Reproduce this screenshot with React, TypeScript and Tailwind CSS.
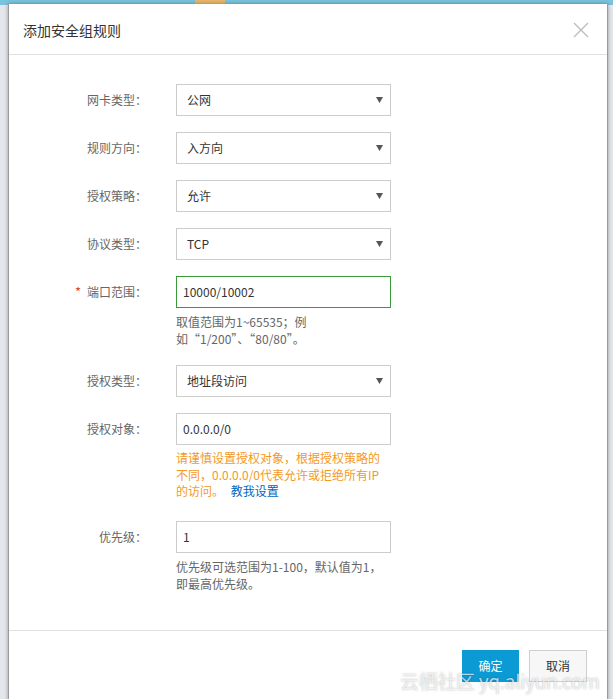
import { ReactNode } from "react"

const font = { fontFamily: '"Microsoft YaHei", "Noto Sans CJK SC", "Noto Sans", sans-serif' }

function Label({ text, required }: { text: string; required?: boolean }) {
  return (
    <div className="w-[138px] shrink-0 h-[32px] flex items-center justify-end text-[12px] text-[#666]">
      {required && <span className="text-[#e0443a] mr-[6px] text-[13px]">*</span>}
      {text}
    </div>
  )
}

function Select({ value }: { value: string }) {
  return (
    <div className="w-[215px] h-[32px] border border-[#ccc] bg-white flex items-center justify-between pl-[10px] pr-[6px] text-[12px] text-[#333]">
      <span>{value}</span>
      <svg width="7" height="6" viewBox="0 0 7 6" className="mr-[1px]">
        <path d="M0 0 L7 0 L3.5 6 Z" fill="#555" />
      </svg>
    </div>
  )
}

function Input({ value, active }: { value: string; active?: boolean }) {
  return (
    <div
      className={
        active
          ? "w-[215px] h-[32px] border border-[#3a9a3a] bg-white flex items-center pl-[6px] text-[12px] text-[#333]"
          : "w-[215px] h-[32px] border border-[#ccc] bg-white flex items-center pl-[6px] text-[12px] text-[#333]"
      }
    >
      {value}
    </div>
  )
}

function Row({ label, required, children }: { label: string; required?: boolean; children: ReactNode }) {
  return (
    <div className="flex items-start">
      <Label text={label} required={required} />
      <div className="ml-[29px]">{children}</div>
    </div>
  )
}

export default function App() {
  return (
    <div className="relative w-[613px] h-[699px] overflow-hidden bg-[#e4e8ec]" style={font}>
      <div className="absolute top-0 left-0 w-full h-[5px] bg-[#79c3de]" />
      <div className="absolute top-0 left-[195px] w-[30px] h-[5px] bg-[#e8b86a]" />
      <div className="absolute top-[4px] left-[8px] w-[600px] h-[720px] bg-white border-l border-r border-[#9a9a9a] shadow-[0_0_4px_rgba(0,0,0,0.35)] flex flex-col">
        <div className="h-[51px] shrink-0 border-b border-[#e1e1e1] flex items-center justify-between pl-[14px] pr-[18px]">
          <span className="text-[14px] text-[#333] mt-[2px]">添加安全组规则</span>
          <svg width="16" height="16" viewBox="0 0 16 16" className="mt-[1px]">
            <path d="M1 1 L15 15 M15 1 L1 15" stroke="#bdbdbd" strokeWidth="1.4" />
          </svg>
        </div>
        <div className="h-[575px] shrink-0 pt-[29px] flex flex-col">
          <div className="flex flex-col gap-[16px]">
            <Row label="网卡类型："><Select value="公网" /></Row>
            <Row label="规则方向："><Select value="入方向" /></Row>
            <Row label="授权策略："><Select value="允许" /></Row>
            <Row label="协议类型："><Select value="TCP" /></Row>
            <Row label="端口范围：" required>
              <Input value="10000/10002" active />
              <div className="mt-[5px] text-[12px] leading-[17px] text-[#666]">
                取值范围为1~65535；例<br />如“1/200”、“80/80”。
              </div>
            </Row>
          </div>
          <div className="mt-[18px] flex flex-col gap-[16px]">
            <Row label="授权类型："><Select value="地址段访问" /></Row>
            <Row label="授权对象：">
              <Input value="0.0.0.0/0" />
              <div className="mt-[5px] text-[12px] leading-[16.5px] text-[#f39a1e]">
                请谨慎设置授权对象，根据授权策略的<br />不同，0.0.0.0/0代表允许或拒绝所有IP<br />的访问。 <span className="text-[#0066bb] ml-[4px]">教我设置</span>
              </div>
            </Row>
          </div>
          <div className="mt-[21px]">
            <Row label="优先级：">
              <Input value="1" />
              <div className="mt-[5px] text-[12px] leading-[17px] text-[#666]">
                优先级可选范围为1-100，默认值为1，<br />即最高优先级。
              </div>
            </Row>
          </div>
        </div>
        <div className="border-t border-[#e1e1e1] pt-[19px] flex justify-end gap-[10px] pr-[20px]">
          <button className="w-[57px] h-[32px] bg-[#0b9ad3] text-white text-[12px]">确定</button>
          <button className="w-[58px] h-[32px] bg-[#f7f7f7] border border-[#cfcfcf] text-[#333] text-[12px]">取消</button>
        </div>
      </div>
      <div className="absolute left-[400px] top-[669px] text-[19px] leading-[24px] tracking-[-0.3px] text-white/70 whitespace-nowrap [text-shadow:0_0_2px_rgba(0,0,0,0.3)]">
        云栖社区 yq.aliyun.com
      </div>
    </div>
  )
}
